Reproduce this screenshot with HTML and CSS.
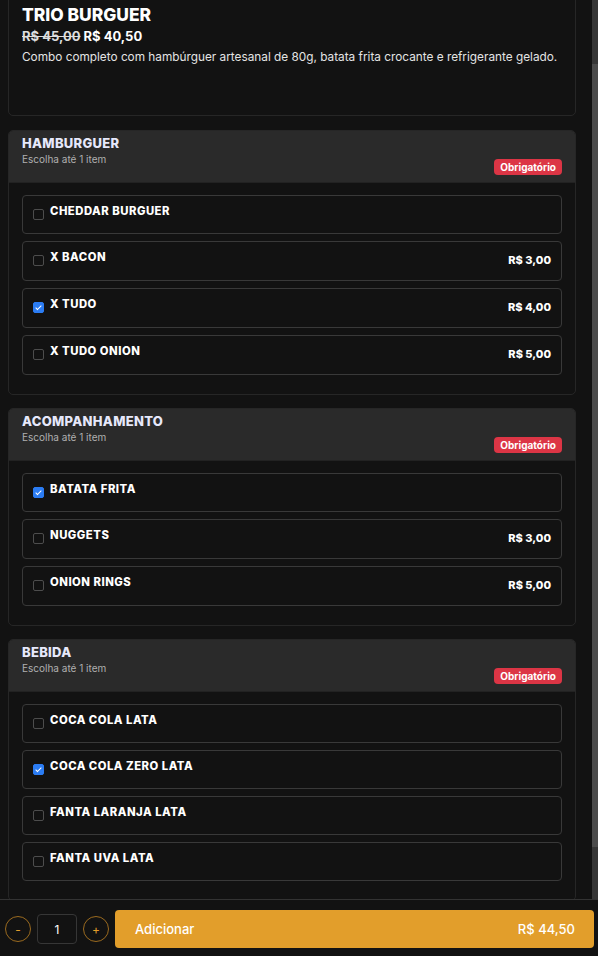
FILE: index.html
```html
<!DOCTYPE html>
<html lang="pt-BR">
<head>
    <meta charset="UTF-8">
    <meta name="viewport" content="width=device-width, initial-scale=1.0">
    <title>Trio Burguer</title>
    <link rel="stylesheet" href="styles.css">
</head>
<body>
    <div class="sheet">
        <div class="sheet-main">
            <div class="sheet-body" id="sheet-body">
                <section class="product">
                    <div class="product-top"></div>
                    <h1>TRIO BURGUER</h1>
                    <p class="product-price"><s>R$ 45,00</s> R$ 40,50</p>
                    <p class="product-desc">Combo completo com hambúrguer artesanal de 80g, batata frita crocante e refrigerante gelado.</p>
                </section>

                <section class="group">
                    <header class="group-head">
                        <div class="group-info">
                            <h2>HAMBURGUER</h2>
                            <p>Escolha até 1 item</p>
                        </div>
                        <span class="badge">Obrigatório</span>
                    </header>
                    <div class="group-body">
                        <label class="option">
                            <input type="checkbox">
                            <span class="option-name">CHEDDAR BURGUER</span>
                        </label>
                        <label class="option">
                            <input type="checkbox">
                            <span class="option-name">X BACON</span>
                            <span class="option-price">R$ 3,00</span>
                        </label>
                        <label class="option">
                            <input type="checkbox" checked>
                            <span class="option-name">X TUDO</span>
                            <span class="option-price">R$ 4,00</span>
                        </label>
                        <label class="option">
                            <input type="checkbox">
                            <span class="option-name">X TUDO ONION</span>
                            <span class="option-price">R$ 5,00</span>
                        </label>
                    </div>
                </section>

                <section class="group">
                    <header class="group-head">
                        <div class="group-info">
                            <h2>ACOMPANHAMENTO</h2>
                            <p>Escolha até 1 item</p>
                        </div>
                        <span class="badge">Obrigatório</span>
                    </header>
                    <div class="group-body">
                        <label class="option">
                            <input type="checkbox" checked>
                            <span class="option-name">BATATA FRITA</span>
                        </label>
                        <label class="option">
                            <input type="checkbox">
                            <span class="option-name">NUGGETS</span>
                            <span class="option-price">R$ 3,00</span>
                        </label>
                        <label class="option">
                            <input type="checkbox">
                            <span class="option-name">ONION RINGS</span>
                            <span class="option-price">R$ 5,00</span>
                        </label>
                    </div>
                </section>

                <section class="group">
                    <header class="group-head">
                        <div class="group-info">
                            <h2>BEBIDA</h2>
                            <p>Escolha até 1 item</p>
                        </div>
                        <span class="badge">Obrigatório</span>
                    </header>
                    <div class="group-body">
                        <label class="option">
                            <input type="checkbox">
                            <span class="option-name">COCA COLA LATA</span>
                        </label>
                        <label class="option">
                            <input type="checkbox" checked>
                            <span class="option-name">COCA COLA ZERO LATA</span>
                        </label>
                        <label class="option">
                            <input type="checkbox">
                            <span class="option-name">FANTA LARANJA LATA</span>
                        </label>
                        <label class="option">
                            <input type="checkbox">
                            <span class="option-name">FANTA UVA LATA</span>
                        </label>
                    </div>
                </section>
            </div>
            <div class="scroll-rail">
                <div class="scroll-thumb" id="scroll-thumb"></div>
            </div>
        </div>

        <footer class="sheet-footer">
            <button class="qty-btn" type="button">-</button>
            <div class="qty-value">1</div>
            <button class="qty-btn" type="button">+</button>
            <button class="add-btn" type="button">
                <span>Adicionar</span>
                <span>R$ 44,50</span>
            </button>
        </footer>
    </div>

    <script>
        const body = document.getElementById('sheet-body');
        const thumb = document.getElementById('scroll-thumb');

        body.scrollTop = 73;

        function syncThumb() {
            const ratio = body.clientHeight / body.scrollHeight;
            thumb.style.height = (body.clientHeight * ratio) + 'px';
            thumb.style.marginTop = (body.scrollTop * ratio) + 'px';
        }

        body.addEventListener('scroll', syncThumb);
        syncThumb();
    </script>
</body>
</html>
```

FILE: styles.css
```css
* {
    box-sizing: border-box;
}
body {
    margin: 0;
    font-family: Inter, 'Noto Sans', sans-serif;
    color: #fff;
    background-color: #121212;
}
h1, h2, p {
    margin: 0;
}
.sheet {
    height: 100vh;
    display: flex;
    flex-direction: column;
}
.sheet-main {
    flex: 1;
    min-height: 0;
    display: flex;
}
.sheet-body {
    flex: 1;
    overflow-y: auto;
    scrollbar-width: none;
    padding: 8px 16px 58px 8px;
    display: flex;
    flex-direction: column;
    gap: 13px;
}
.sheet-body > * {
    flex-shrink: 0;
}
.scroll-rail {
    width: 6px;
    background-color: #363636;
}
.scroll-thumb {
    background-color: #4b4b4b;
}
.product {
    border: 1px solid #262626;
    border-radius: 5px;
    padding: 14px 13px 50px 13px;
    margin-bottom: 1px;
}
.product-top {
    height: 54px;
}
.product h1 {
    font-size: 17.4px;
    line-height: 22px;
    font-weight: 800;
}
.product-price {
    font-size: 13px;
    line-height: 18px;
    font-weight: 700;
    margin-top: 1px;
}
.product-price s {
    color: #ddd;
}
.product-desc {
    font-size: 11.8px;
    line-height: 16px;
    color: #e4e4e4;
    margin-top: 4px;
}
.group {
    border: 1px solid #262626;
    border-radius: 5px;
    overflow: hidden;
}
.group-head {
    height: 52px;
    background-color: #2a2a2a;
    border-bottom: 1px solid #222;
    padding: 3px 13px 7px 13px;
    display: flex;
    justify-content: space-between;
}
.group-info h2 {
    font-size: 13px;
    line-height: 18px;
    font-weight: 800;
    color: #e6e8fb;
    letter-spacing: 0.3px;
}
.group-info p {
    font-size: 10px;
    line-height: 14px;
    color: #b0b0b0;
}
.badge {
    align-self: flex-end;
    background-color: #dc3545;
    color: #fff;
    font-size: 10px;
    font-weight: 700;
    line-height: 16px;
    padding: 0 6px;
    border-radius: 4px;
}
.group-body {
    padding: 12px 13px 19px 13px;
    display: flex;
    flex-direction: column;
    gap: 7px;
}
.option {
    display: flex;
    align-items: flex-start;
    gap: 6px;
    border: 1px solid #393939;
    border-radius: 4px;
    padding: 8px 10px 13px 10px;
    cursor: pointer;
}
.option input {
    appearance: none;
    width: 11px;
    height: 11px;
    margin: 5px 0 0 0;
    border: 1px solid #4d4d4d;
    border-radius: 2px;
    background-color: transparent;
    position: relative;
    flex-shrink: 0;
}
.option input:checked {
    background-color: #2b7cf3;
    border-color: #2b7cf3;
}
.option input:checked::after {
    content: '';
    position: absolute;
    left: 3px;
    top: 1px;
    width: 2px;
    height: 5px;
    border: solid #fff;
    border-width: 0 1.5px 1.5px 0;
    transform: rotate(45deg);
}
.option-name {
    flex: 1;
    font-size: 11.3px;
    line-height: 15px;
    font-weight: 800;
    letter-spacing: 0.5px;
}
.option-price {
    font-size: 11px;
    line-height: 13px;
    padding-top: 4px;
    font-weight: 800;
}
.sheet-footer {
    height: 57px;
    border-top: 1px solid #333;
    display: flex;
    align-items: center;
    gap: 6px;
    padding: 2px 4px 0 5px;
}
.qty-btn {
    width: 26px;
    height: 26px;
    border-radius: 50%;
    border: 1px solid #9a6a1f;
    background-color: transparent;
    color: #e29d2b;
    font-family: inherit;
    font-size: 12px;
    padding: 0;
    cursor: pointer;
}
.qty-value {
    width: 40px;
    height: 30px;
    border: 1px solid #363636;
    border-radius: 4px;
    display: flex;
    align-items: center;
    justify-content: center;
    font-size: 12px;
}
.add-btn {
    flex: 1;
    height: 38px;
    border: none;
    border-radius: 4px;
    background-color: #e29e2b;
    color: #fff;
    font-family: inherit;
    font-size: 13px;
    font-weight: 500;
    display: flex;
    justify-content: space-between;
    align-items: center;
    padding: 0 19px 0 20px;
    cursor: pointer;
}
```
